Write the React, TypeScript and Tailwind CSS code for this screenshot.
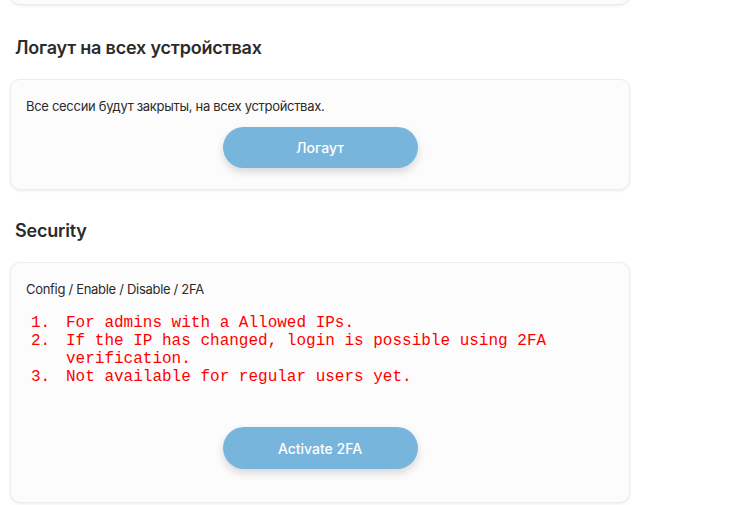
export default function App() {
  const rules = [
    "For admins with a Allowed IPs.",
    "If the IP has changed, login is possible using 2FA verification.",
    "Not available for regular users yet.",
  ];

  return (
    <div className="min-h-[505px] bg-white pl-[10px] font-['Inter','Noto_Sans',sans-serif] text-[#2b2b2b] overflow-hidden">
      <div className="w-[620px]">
        {/* tail of the previous card */}
        <div className="-mt-[40px] h-[45px] rounded-[10px] border border-[#ececec] bg-[#fcfcfc] shadow-[0_1px_3px_rgba(0,0,0,0.08)]" />

        <h2 className="mt-[29px] mb-[17px] pl-[5px] text-[18px] leading-[28px] font-semibold tracking-[-0.2px]">
          Логаут на всех устройствах
        </h2>
        <div className="h-[111px] rounded-[10px] border border-[#ececec] bg-[#fcfcfc] px-[15px] pt-[16px] shadow-[0_1px_3px_rgba(0,0,0,0.08)]">
          <p className="text-[13px] leading-[20px] tracking-[-0.3px]">
            Все сессии будут закрыты, на всех устройствах.
          </p>
          <div className="mt-[11px] flex justify-center">
            <button className="h-[41px] w-[195px] rounded-full bg-[#78b5dc] text-[14px] font-medium text-white shadow-[0_4px_8px_rgba(0,0,0,0.15)]">
              Логаут
            </button>
          </div>
        </div>

        <h2 className="mt-[27px] mb-[17px] pl-[5px] text-[18px] leading-[28px] font-semibold tracking-[-0.2px]">
          Security
        </h2>
        <div className="h-[241px] rounded-[10px] border border-[#ececec] bg-[#fcfcfc] px-[15px] pt-[16px] shadow-[0_1px_3px_rgba(0,0,0,0.08)]">
          <p className="text-[13px] leading-[20px] tracking-[-0.3px]">
            Config / Enable / Disable / 2FA
          </p>
          <ol className="mt-[15px] pr-[50px] font-['Liberation_Mono','Courier_New',monospace] text-[16px] leading-[18px] text-[#ff0000]">
            {rules.map((r, i) => (
              <li key={r} className="flex">
                <span className="w-[40px] shrink-0 pl-[5px]">{i + 1}.</span>
                <span>{r}</span>
              </li>
            ))}
          </ol>
          <div className="mt-[41px] flex justify-center">
            <button className="h-[42px] w-[195px] rounded-full bg-[#78b5dc] text-[14px] font-medium text-white shadow-[0_4px_8px_rgba(0,0,0,0.15)]">
              Activate 2FA
            </button>
          </div>
        </div>
      </div>
    </div>
  );
}
